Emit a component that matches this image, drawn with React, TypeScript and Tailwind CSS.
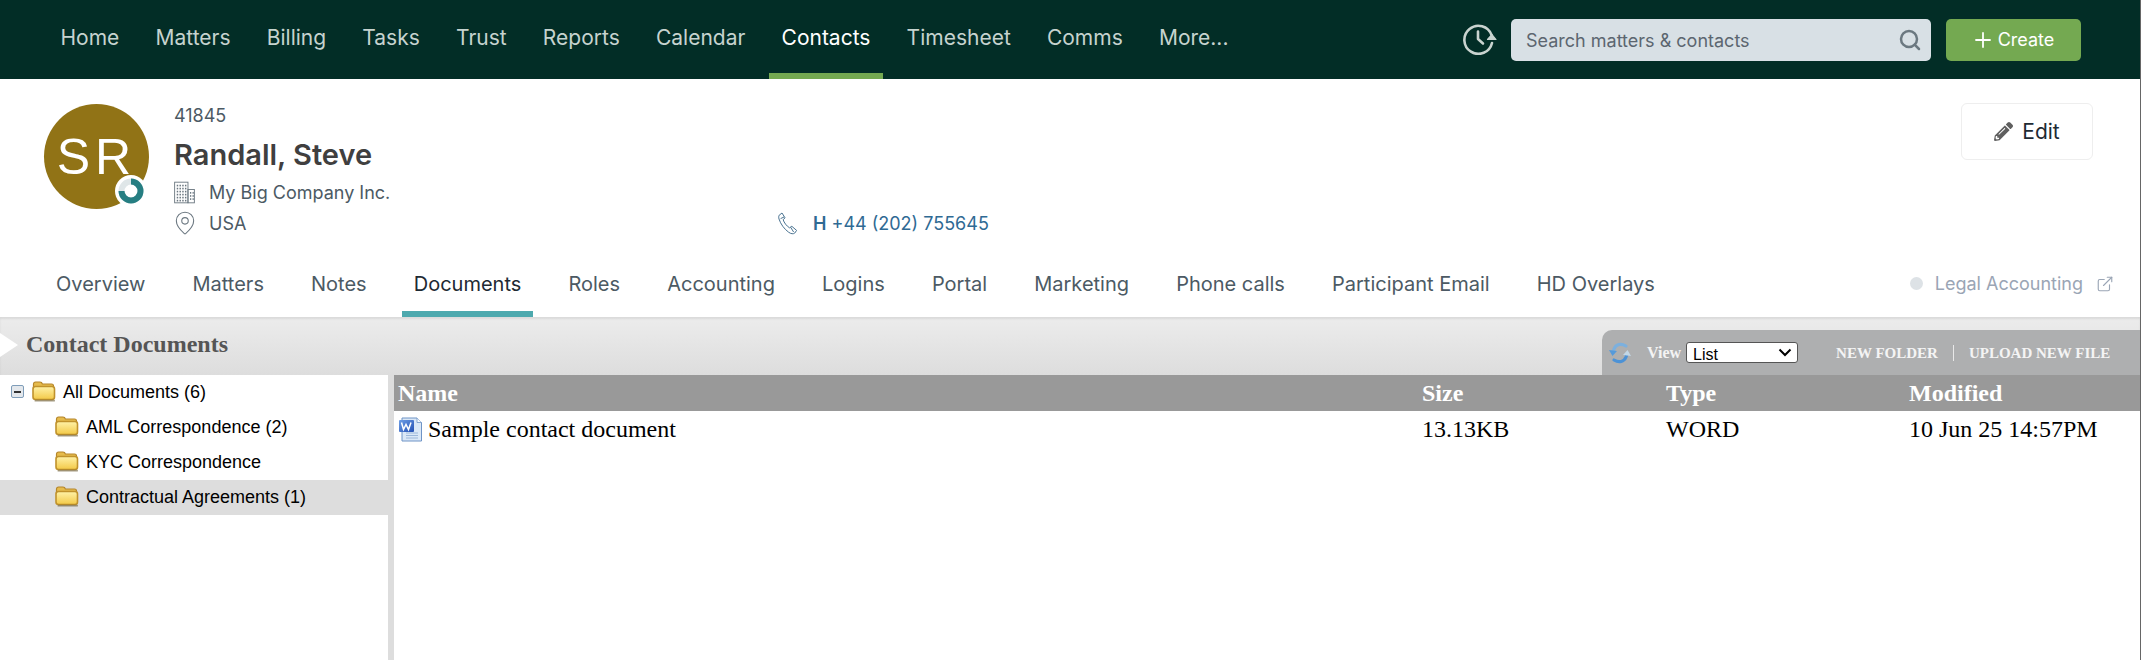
import React from "react";
import { Search, Plus, MapPin, ExternalLink } from "lucide-react";
import { FaPencilAlt } from "react-icons/fa";

const topNav = ["Home", "Matters", "Billing", "Tasks", "Trust", "Reports", "Calendar", "Contacts", "Timesheet", "Comms", "More..."];
const tabs = ["Overview", "Matters", "Notes", "Documents", "Roles", "Accounting", "Logins", "Portal", "Marketing", "Phone calls", "Participant Email", "HD Overlays"];

function HistoryIcon() {
  return (
    <svg width="36" height="32" viewBox="0 0 36 32" fill="none" stroke="#c9d3cf" strokeWidth="2.6" strokeLinecap="round" strokeLinejoin="round">
      <path d="M29.5 12 A14 14 0 1 0 30 20" />
      <path d="M16 8.5 V16 L21 20.5" />
      <path d="M25.5 16.5 L30 11.5 L34 16.5 Z" fill="#c9d3cf" strokeWidth="1.2" />
    </svg>
  );
}

function BuildingIcon() {
  const cells: React.ReactNode[] = [];
  for (let r = 0; r < 6; r++) for (let c = 0; c < 4; c++) cells.push(<rect key={`a${r}${c}`} x={3 + c * 3} y={3.5 + r * 3.3} width="1.6" height="1.8" fill="#6b7780" />);
  for (let r = 0; r < 3; r++) for (let c = 0; c < 2; c++) cells.push(<rect key={`b${r}${c}`} x={17.5 + c * 2.8} y={11.5 + r * 3.4} width="1.4" height="1.8" fill="#6b7780" />);
  return (
    <svg width="21" height="23" viewBox="0 0 23 24" fill="none" stroke="#6b7780" strokeWidth="1">
      <rect x="0.7" y="0.7" width="14.6" height="22.6" />
      <rect x="15.3" y="8.7" width="7" height="14.6" />
      <g stroke="none">{cells}</g>
    </svg>
  );
}

function PhoneIcon() {
  return (
    <svg width="22" height="23" viewBox="0 0 22 23" fill="none" stroke="#4a7391" strokeWidth="1" strokeLinejoin="round">
      <path d="M1.2 3.2 L4 1 L7 5.8 L5.2 7.8 C6 10.5 8.5 14 11.5 15.8 L13.8 14.3 L18.6 18.4 L16.8 21 C15.5 22.2 13 22 10.6 20.2 C6.2 17 2.6 12 1 7 C0.6 5.4 0.6 4 1.2 3.2 Z" />
      <path d="M6 5 L2.6 6.6 M12.6 15.2 L15.6 20" />
    </svg>
  );
}

function Folder({ id }: { id: string }) {
  return (
    <svg width="24" height="21" viewBox="0 0 24 21" className="shrink-0">
      <defs>
        <linearGradient id={id} x1="0" y1="0" x2="0" y2="1">
          <stop offset="0" stopColor="#fff2a8" />
          <stop offset="1" stopColor="#f3c947" />
        </linearGradient>
      </defs>
      <path d="M1.5 7 V3.2 Q1.5 1 3.6 1 H8 Q9.8 1 10.4 3 H19.5 Q21.5 3 21.5 5 V7 Z" fill="#e6bb4c" stroke="#b5862a" strokeWidth="1.2" />
      <rect x="1" y="5.5" width="21.5" height="13" rx="2.5" fill={`url(#${id})`} stroke="#c0922c" strokeWidth="1.6" />
      <rect x="2.5" y="18.8" width="20.5" height="1.8" rx="0.9" fill="#6b5c34" opacity="0.6" />
    </svg>
  );
}

function WordIcon() {
  return (
    <svg width="25" height="25" viewBox="0 0 25 25" className="shrink-0">
      <defs>
        <linearGradient id="wd" x1="0" y1="0" x2="1" y2="1">
          <stop offset="0" stopColor="#6f9fe6" />
          <stop offset="1" stopColor="#2450b4" />
        </linearGradient>
      </defs>
      <path d="M4 1 H19 L23.5 5.5 V24 H4 Z" fill="#dbe8f7" stroke="#6f94c6" strokeWidth="1" />
      <path d="M19 1 V5.5 H23.5" fill="#f4f8fd" stroke="#6f94c6" strokeWidth="0.8" />
      <path d="M8 16 H20 M8 18.5 H20 M8 21 H20" stroke="#9db8da" strokeWidth="1" />
      <rect x="1" y="3" width="15" height="12" rx="1" fill="url(#wd)" />
      <path d="M3.5 5.5 L5.5 12.5 L8 7.5 L10.5 12.5 L13 5.5" fill="none" stroke="#fff" strokeWidth="1.5" />
    </svg>
  );
}

function RefreshIcon() {
  return (
    <svg width="24" height="24" viewBox="0 0 24 24" fill="none" strokeLinecap="round">
      <path d="M18 5 C13 2 8 3 6 8 L5 11" stroke="#7cb0de" strokeWidth="3.2" />
      <path d="M6 19 C11 22 16 21 18 16 L19 13" stroke="#4c92d6" strokeWidth="3.2" />
      <path d="M1 9 L4.5 15 L9 10 Z" fill="#559ada" />
      <path d="M23 15 L19.5 9 L15 14 Z" fill="#c3d7e6" />
    </svg>
  );
}

function TreeRow({ label, id, indent, selected }: { label: string; id: string; indent: boolean; selected?: boolean }) {
  return (
    <div className={`flex h-[35px] items-center pb-[2px] ${selected ? "bg-[#dddddd]" : ""} ${indent ? "pl-[55px]" : "pl-[11px]"}`}>
      {!indent && (
        <div className="mr-[8px] flex h-[13px] w-[13px] items-center justify-center rounded-[2px] border border-[#7f9db9] bg-[#e4e8ec]">
          <div className="h-[2px] w-[7px] bg-[#333333]" />
        </div>
      )}
      <Folder id={id} />
      <span className="ml-[7px] text-[18px] leading-none text-black">{label}</span>
    </div>
  );
}

export default function App() {
  return (
    <div className="flex h-[660px] w-full flex-col overflow-hidden border-r border-[#666666] bg-white font-['Inter',sans-serif]">
      <header className="flex h-[79px] shrink-0 items-stretch bg-[#022d26] pl-[48px]">
        <nav className="flex gap-[11.2px]">
          {topNav.map((n) => (
            <a
              key={n}
              className={`flex items-center border-b-[6px] px-[12.5px] pt-[3px] text-[21px] ${n === "Contacts" ? "border-[#74a951] text-white" : "border-transparent text-[#c6d3cf]"}`}
            >
              {n}
            </a>
          ))}
        </nav>
        <div className="ml-auto flex items-center pr-[59px]">
          <div className="-mt-[2px] -mr-[1px]"><HistoryIcon /></div>
          <div className="ml-[14px] flex h-[42px] w-[420px] items-center justify-between rounded-[5px] bg-[#d8e0e5] pl-[15px] pr-[9px] text-[18px] text-[#5c6670]">
            <span className="pt-[1px]">Search matters &amp; contacts</span>
            <Search size={24} strokeWidth={2.5} className="text-[#6b7880]" />
          </div>
          <div className="ml-[15px] flex h-[42px] w-[135px] items-center justify-center rounded-[5px] bg-[#74a951] pr-[2px] text-[18px] text-white">
            <Plus size={24} strokeWidth={1.8} className="mr-[3px]" />
            <span>Create</span>
          </div>
        </div>
      </header>

      <section className="flex h-[171px] shrink-0 items-start justify-between pl-[44px] pr-[47px] pt-[25px]">
        <div className="flex items-start">
          <div className="relative flex h-[105px] w-[105px] shrink-0 items-center justify-center rounded-full bg-[#917316] font-['Liberation_Sans',sans-serif] text-[50px] leading-none tracking-[5px] text-white">
            SR
            <div className="absolute left-[71px] top-[71px] flex h-[32px] w-[32px] items-center justify-center rounded-full bg-white tracking-normal">
              <svg width="26" height="26" viewBox="0 0 26 26" fill="none">
                <circle cx="13" cy="13" r="9.5" stroke="#dfe6e8" strokeWidth="6" />
                <path d="M13 3.5 A9.5 9.5 0 1 1 3.5 13" stroke="#267e82" strokeWidth="6" />
              </svg>
            </div>
          </div>
          <div className="ml-[25px] flex flex-col">
            <div className="h-[24px] text-[18px] leading-[24px] text-[#4c5a64]">41845</div>
            <div className="mt-[8px] h-[38px] text-[29px] font-semibold leading-[38px] text-[#403f3f]">Randall, Steve</div>
            <div className="mt-[3px] flex h-[30px] items-center text-[18px] text-[#4c5a64]">
              <span className="flex w-[35px] items-center"><BuildingIcon /></span>
              My Big Company Inc.
            </div>
            <div className="mt-[1px] flex h-[30px] items-center text-[18px] text-[#4c5a64]">
              <div className="flex w-[604px] items-center">
                <span className="flex w-[35px] items-center"><MapPin size={26} strokeWidth={1} className="-ml-[2px] text-[#6b7780]" /></span>
                USA
              </div>
              <PhoneIcon />
              <span className="ml-[13px] text-[#2f6a94]"><span className="font-semibold">H</span> +44 (202) 755645</span>
            </div>
          </div>
        </div>
        <div className="-mt-[1px] flex h-[57px] w-[132px] items-center justify-center rounded-[6px] border border-[#eeeeee] bg-white text-[21px] text-[#1e2a33]">
          <FaPencilAlt size={19} className="mr-[9px] text-[#5f5f5f]" />
          Edit
        </div>
      </section>

      <section className="flex h-[67px] shrink-0 items-stretch justify-between pl-[44px] pr-[26px]">
        <nav className="flex gap-[23.1px]">
          {tabs.map((t) => (
            <a
              key={t}
              className={`flex items-center border-b-[6px] px-[12px] pt-[7px] text-[20px] ${t === "Documents" ? "border-[#4da9ae] text-[#1e2a33]" : "border-transparent text-[#4c5a64]"}`}
            >
              {t}
            </a>
          ))}
        </nav>
        <div className="flex items-center text-[18px] text-[#9aa5b5]">
          <span className="mr-[12px] h-[13px] w-[13px] rounded-full bg-[#dde2e6]" />
          Legal Accounting
          <ExternalLink size={18} strokeWidth={1.5} className="ml-[13px]" />
        </div>
      </section>

      <section className="relative flex h-[58px] shrink-0 items-stretch justify-between bg-gradient-to-b from-[#ececec] to-[#dddddd] shadow-[inset_0_2px_2px_rgba(0,0,0,0.08)]">
        <div className="absolute left-0 top-[16px] h-0 w-0 border-y-[12px] border-l-[18px] border-y-transparent border-l-white" />
        <h1 className="ml-[26px] flex items-center pb-[5px] font-['Liberation_Serif',serif] text-[24px] font-bold text-[#555555]">Contact Documents</h1>
        <div className="mt-[13px] flex w-[538px] items-center rounded-tl-[10px] bg-[#aeafb0] pl-[6px] font-['Liberation_Serif',serif] text-[15px] font-bold text-[#f4f4f4]">
          <RefreshIcon />
          <span className="ml-[15px] text-[16px]">View</span>
          <div className="relative ml-[5px] h-[21px] w-[112px]">
            <select className="h-full w-full appearance-none rounded-[3px] border border-[#555555] bg-white pb-[2px] pl-[6px] font-['Liberation_Sans',sans-serif] text-[16px] font-normal text-black">
              <option>List</option>
            </select>
            <svg width="14" height="9" viewBox="0 0 14 9" fill="none" stroke="#000" strokeWidth="2" className="pointer-events-none absolute right-[6px] top-[6px]">
              <path d="M1.5 1.5 L7 7 L12.5 1.5" />
            </svg>
          </div>
          <span className="ml-[38px] pt-[1px]">NEW FOLDER</span>
          <span className="mx-[15px] h-[16px] w-px bg-[#e8e8e8]" />
          <span className="pt-[1px]">UPLOAD NEW FILE</span>
        </div>
      </section>

      <main className="flex min-h-0 flex-1">
        <aside className="w-[394px] shrink-0 border-r-[6px] border-[#dddddd] font-['Liberation_Sans',sans-serif]">
          <TreeRow label="All Documents (6)" id="f0" indent={false} />
          <TreeRow label="AML Correspondence (2)" id="f1" indent />
          <TreeRow label="KYC Correspondence" id="f2" indent />
          <TreeRow label="Contractual Agreements (1)" id="f3" indent selected />
        </aside>
        <div className="min-w-0 flex-1 font-['Liberation_Serif',serif]">
          <div className="grid h-[36px] grid-cols-[1024px_244px_243px_1fr] items-center bg-[#999999] pl-[4px] text-[24px] font-bold text-white">
            <span>Name</span>
            <span>Size</span>
            <span>Type</span>
            <span>Modified</span>
          </div>
          <div className="grid h-[36px] grid-cols-[1024px_244px_243px_1fr] items-center pl-[4px] text-[24px] text-black">
            <span className="flex items-center">
              <WordIcon />
              <span className="ml-[5px]">Sample contact document</span>
            </span>
            <span>13.13KB</span>
            <span>WORD</span>
            <span>10 Jun 25 14:57PM</span>
          </div>
        </div>
      </main>
    </div>
  );
}
